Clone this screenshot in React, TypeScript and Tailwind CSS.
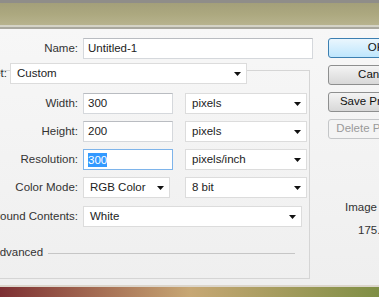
import React from "react";

const FONT = { fontFamily: '"Liberation Sans", Arial, sans-serif' };

function Arrow() {
  return (
    <svg width="7" height="4" viewBox="0 0 7 4" className="shrink-0">
      <path d="M0 0h7L3.5 4z" fill="#111" />
    </svg>
  );
}

function Field({ w, children, focus }: { w: string; children?: React.ReactNode; focus?: boolean }) {
  return (
    <div
      className={`${w} h-[21px] bg-white border ${focus ? "border-[#7eb4ea]" : "border-[#d5d8dc] border-t-[#b9bcc1]"} flex items-center pl-[4px] text-[#222]`}
    >
      {children}
    </div>
  );
}

function Select({ w, value }: { w: string; value: string }) {
  return (
    <div className={`${w} h-[21px] bg-white border border-[#dcdcdc] flex items-center justify-between pl-[6px] pr-[5px] text-[#222]`}>
      <span>{value}</span>
      <Arrow />
    </div>
  );
}

function Label({ text }: { text: string }) {
  return <div className="w-[78px] shrink-0 flex justify-end whitespace-nowrap text-[#333]">{text}</div>;
}

function Btn({ label, kind }: { label: string; kind?: "default" | "disabled" }) {
  const tone =
    kind === "default"
      ? "border-[#3c7fb1] bg-gradient-to-b from-[#eaf6fd] to-[#bee6fd] text-[#111]"
      : kind === "disabled"
      ? "border-[#c4c6c8] bg-[#f4f4f4] text-[#9a9a9a]"
      : "border-[#8e8f8f] bg-gradient-to-b from-[#f4f4f4] to-[#d8d8d8] text-[#111]";
  return (
    <div className={`w-[96px] h-[20px] shrink-0 rounded-[3px] border ${tone} flex items-center justify-center whitespace-nowrap`}>
      {label}
    </div>
  );
}

export default function App() {
  return (
    <div className="w-[379px] h-[297px] overflow-hidden flex flex-col text-[11.5px]" style={FONT}>
      {/* window chrome */}
      <div className="h-[29px] shrink-0 flex flex-col">
        <div className="h-[3px] bg-[#8f8d89]" />
        <div className="h-[22px] bg-gradient-to-b from-[#a39f7a] via-[#aca87f] to-[#b7b38e]" />
        <div className="h-[2px] bg-[#d4d3c6]" />
        <div className="h-[2px] bg-[#a9a89e]" />
      </div>

      <div className="flex-1 flex bg-gradient-to-b from-[#f7f7f7] to-[#efefef]">
        {/* left column */}
        <div className="w-[314px] shrink-0 flex flex-col">
          <div className="mt-[9px] flex items-center gap-[5px]">
            <Label text="Name:" />
            <Field w="w-[230px]">Untitled-1</Field>
          </div>

          <div className="mt-[11px] w-[310px] border-t border-r border-b border-[#d5d5d5] flex flex-col pb-[18px]">
            <div className="-mt-[8px] flex items-center gap-[3px]">
              <div className="w-[7px] shrink-0 flex justify-end whitespace-nowrap text-[#333]">Preset:</div>
              <Select w="w-[237px]" value="Custom" />
            </div>

            <div className="mt-[9px] flex flex-col gap-[7px]">
              <div className="flex items-center gap-[5px]">
                <Label text="Width:" />
                <Field w="w-[90px]">300</Field>
                <div className="w-[2px]" />
                <Select w="w-[122px]" value="pixels" />
              </div>
              <div className="flex items-center gap-[5px]">
                <Label text="Height:" />
                <Field w="w-[90px]">200</Field>
                <div className="w-[2px]" />
                <Select w="w-[122px]" value="pixels" />
              </div>
              <div className="flex items-center gap-[5px]">
                <Label text="Resolution:" />
                <Field w="w-[90px]" focus>
                  <span className="bg-[#3399ff] text-white leading-[14px]">300</span>
                </Field>
                <div className="w-[2px]" />
                <Select w="w-[122px]" value="pixels/inch" />
              </div>
              <div className="flex items-center gap-[5px]">
                <Label text="Color Mode:" />
                <Select w="w-[87px]" value="RGB Color" />
                <div className="w-[5px]" />
                <Select w="w-[122px]" value="8 bit" />
              </div>
              <div className="mt-[1px] flex items-center gap-[5px]">
                <Label text="Background Contents:" />
                <Select w="w-[219px]" value="White" />
              </div>
            </div>

            <div className="mt-[19px] h-[14px] flex items-center pr-[14px]">
              <span className="-ml-[8px] text-[#333]">Advanced</span>
              <div className="ml-[5px] flex-1 h-px bg-[#c6c6c6]" />
            </div>
          </div>
        </div>

        {/* right column */}
        <div className="flex-1 flex flex-col">
          <div className="mt-[9px] ml-[14px] flex flex-col gap-[7px]">
            <Btn label="OK" kind="default" />
            <Btn label="Cancel" />
            <Btn label="Save Preset..." />
            <Btn label="Delete Preset..." kind="disabled" />
          </div>
          <div className="mt-[60px] flex flex-col gap-[6px] text-[#333] whitespace-nowrap">
            <div className="pl-[31px]">Image Size:</div>
            <div className="pl-[44px]">175.8K</div>
          </div>
        </div>
      </div>

      {/* bottom chrome */}
      <div className="h-[12px] shrink-0 flex flex-col">
        <div className="h-[2px] bg-[#dcd6cc]" />
        <div className="flex-1 bg-gradient-to-r from-[#7d2f33] via-[#c7a774] to-[#7f8f45]" />
      </div>
    </div>
  );
}
